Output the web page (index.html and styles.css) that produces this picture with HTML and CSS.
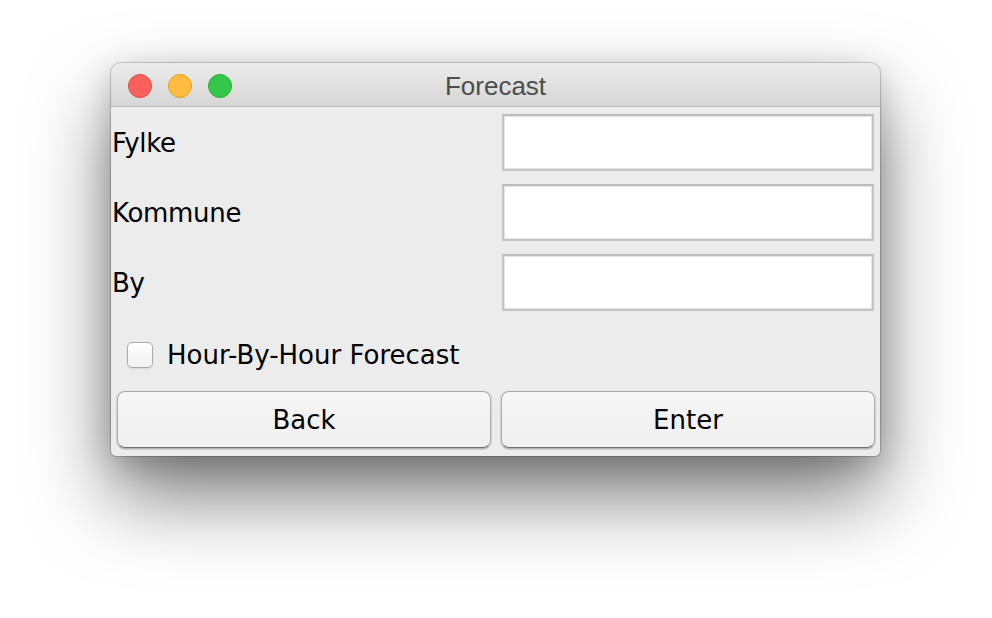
FILE: index.html
```html
<!DOCTYPE html>
<html lang="no">
<head>
<meta charset="utf-8">
<title>Forecast</title>
<link rel="stylesheet" href="styles.css">
</head>
<body>
<div class="window">
  <div class="titlebar">
    <div class="lights">
      <span class="light red"></span>
      <span class="light yellow"></span>
      <span class="light green"></span>
    </div>
    <div class="title">Forecast</div>
    <div class="spacer"></div>
  </div>
  <div class="content">
    <div class="form">
      <label class="label">Fylke</label>
      <div class="field"></div>
      <label class="label">Kommune</label>
      <div class="field"></div>
      <label class="label">By</label>
      <div class="field"></div>
    </div>
    <div class="checkrow">
      <span class="checkbox"></span>
      <span class="checklabel">Hour-By-Hour Forecast</span>
    </div>
    <div class="buttons">
      <div class="button">Back</div>
      <div class="button">Enter</div>
    </div>
  </div>
</div>
</body>
</html>
```

FILE: styles.css
```css
html, body {
  margin: 0;
  padding: 0;
  background: #ffffff;
}
body {
  width: 992px;
  height: 618px;
  overflow: hidden;
  padding: 63px 0 0 111px;
  box-sizing: border-box;
  font-family: "DejaVu Sans", "Liberation Sans", sans-serif;
}
.window {
  width: 769px;
  background: #ececec;
  border-radius: 10px 10px 5px 5px;
  box-shadow: 0 0 0 1px rgba(0,0,0,0.18), 0 40px 80px rgba(0,0,0,0.52), 0 8px 30px rgba(0,0,0,0.18);
}
.titlebar {
  height: 43px;
  border-bottom: 1px solid #bcbcbc;
  border-radius: 10px 10px 0 0;
  background: linear-gradient(#ececec, #d6d6d6);
  display: grid;
  grid-template-columns: 1fr auto 1fr;
  align-items: center;
}
.lights {
  display: flex;
  gap: 16px;
  padding-left: 17px;
  padding-top: 2px;
}
.light {
  width: 22px;
  height: 22px;
  border-radius: 50%;
  border: 1px solid;
}
.red { background: #fc605c; border-color: #e2463f; }
.yellow { background: #fdbc40; border-color: #e1a116; }
.green { background: #34c84a; border-color: #2aac2c; }
.title {
  font-family: "Liberation Sans", "Helvetica", sans-serif;
  font-size: 26px;
  color: #4d4d4d;
  padding-top: 3px;
}
.content {
  padding: 7px 5px 8px 0;
}
.form {
  display: grid;
  grid-template-columns: 391px 372px;
  grid-auto-rows: 57px;
  row-gap: 13px;
}
.label {
  font-size: 26px;
  letter-spacing: -0.3px;
  color: #000;
  display: flex;
  align-items: center;
  padding-left: 1px;
}
.field {
  background: #ffffff;
  border: 2px solid #c4c4c4;
  border-top-color: #bdbdbd;
  box-shadow: inset 0 0 0 1px #e4e4e4;
}
.checkrow {
  display: flex;
  align-items: center;
  margin-top: 31px;
  padding-left: 16px;
  height: 26px;
}
.checkbox {
  width: 24px;
  height: 24px;
  border: 1px solid #a9a9a9;
  border-radius: 5px;
  background: linear-gradient(#ffffff, #f1f1f1);
  box-shadow: 0 1px 1px rgba(0,0,0,0.08);
}
.checklabel {
  margin-left: 14px;
  font-size: 26px;
  color: #000;
}
.buttons {
  display: grid;
  grid-template-columns: 1fr 1fr;
  gap: 10px;
  margin-top: 23px;
  padding-left: 6px;
}
.button {
  height: 57px;
  box-sizing: border-box;
  border: 1px solid #a9a9a9;
  border-bottom-color: #727272;
  border-radius: 8px;
  background: linear-gradient(#f6f6f6, #f0f0f0);
  box-shadow: 0 1px 2px rgba(0,0,0,0.35);
  display: flex;
  align-items: center;
  justify-content: center;
  font-size: 26px;
  color: #000;
}
```
